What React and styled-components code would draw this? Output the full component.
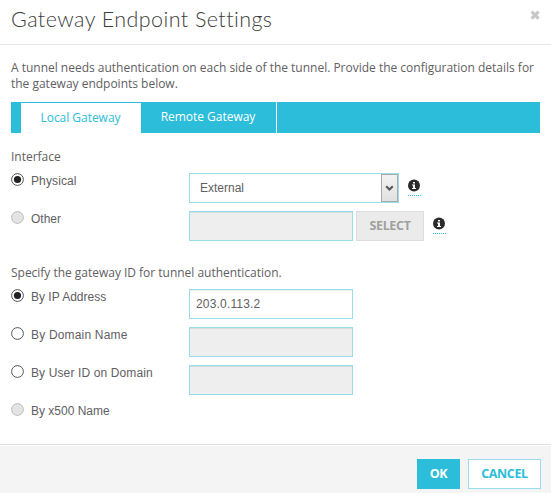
import React from "react";
import styled, { createGlobalStyle } from "styled-components";

const GlobalStyle = createGlobalStyle`
  * { box-sizing: border-box; }
  body { margin: 0; background: #fff; overflow: hidden; }
`;

const Dialog = styled.div`
  width: 551px;
  height: 493px;
  display: flex;
  flex-direction: column;
  background: #fff;
  color: #5f6062;
  font: 12px/16px "Open Sans", sans-serif;
`;

const Header = styled.header`
  display: flex;
  justify-content: space-between;
  height: 45px;
  padding: 5px 10px 0 11px;
  border-bottom: 1px solid #e9e9e9;
`;

const Title = styled.h1`
  margin: 0;
  font: 300 21.5px/29px Lato, sans-serif;
  letter-spacing: 0.44px;
  color: #3c3c3c;
  white-space: nowrap;
`;

const CloseButton = styled.button`
  width: 11px;
  height: 11px;
  margin-top: 5px;
  padding: 0;
  border: 0;
  background: none;
  svg { display: block; }
`;

const Body = styled.main`
  flex: 1;
  padding: 15px 11px 0;
`;

const Intro = styled.p`
  margin: 0 -10px 10px 0;
  letter-spacing: -0.01px;
`;

const TabBar = styled.nav`
  display: flex;
  height: 31px;
  padding-left: 10px;
  background: #2bbdd9;
`;

const Tab = styled.button`
  width: ${(p) => (p.$active ? 120 : 136)}px;
  height: ${(p) => (p.$active ? 30 : 31)}px;
  margin: ${(p) => (p.$active ? "1px 0 0" : "0")};
  padding: 0 1px 1px 0;
  border: 0;
  border-right: ${(p) => (p.$active ? "0" : "1px solid #fff")};
  background: ${(p) => (p.$active ? "#fff" : "#2bbdd9")};
  color: ${(p) => (p.$active ? "#2bbdd9" : "#fff")};
  font: 12px/16px "Open Sans", sans-serif;
  letter-spacing: -0.03px;
`;

const SectionTitle = styled.h2`
  margin: ${(p) => (p.$spaced ? "24px 0 8px" : "16px 0 8px")};
  font: 400 12px/16px "Open Sans", sans-serif;
  letter-spacing: -0.02px;
`;

const Row = styled.div`
  display: flex;
  align-items: flex-start;
  height: 30px;
  margin-bottom: 8px;
`;

const RadioLabel = styled.label`
  display: flex;
  gap: 7px;
  width: 178px;
  font: 12px/16px "Liberation Sans", Arial, sans-serif;
  letter-spacing: ${(p) => p.$tracking}px;
  svg { flex: none; }
`;

const Field = styled.input`
  width: 164px;
  height: 30px;
  padding: 0 6px;
  border: 1px solid #95dfec;
  border-radius: 0;
  background: ${(p) => (p.disabled ? "#eee" : "#fff")};
  box-shadow: inset 0 1px 0 ${(p) => (p.disabled ? "#d8dcdd" : "#ececec")};
  color: #5f6062;
  font: 12px/16px "Liberation Sans", Arial, sans-serif;
  letter-spacing: 0.17px;
`;

const SelectBox = styled.div`
  display: flex;
  align-items: center;
  justify-content: space-between;
  width: 210px;
  height: 30px;
  padding-left: 10px;
  border: 1px solid #95dfec;
  font: 12px/16px "Liberation Sans", Arial, sans-serif;
`;

const Arrow = styled.span`
  display: flex;
  align-items: center;
  justify-content: center;
  width: 17px;
  height: 28px;
  border: 1px solid #a9a9a9;
  background: linear-gradient(#f2f2f2, #e1e1e1);
`;

const Button = styled.button`
  width: ${(p) => p.$width}px;
  height: 30px;
  padding: 0;
  border: 1px solid ${(p) => p.$border};
  background: ${(p) => p.$bg};
  color: ${(p) => p.$fg};
  font: 700 12.5px/16px "Open Sans", sans-serif;
  letter-spacing: -0.35px;
`;

const SelectButton = styled(Button)`
  margin-left: 3px;
`;

const Hint = styled.span`
  width: 13px;
  height: 17px;
  margin: 6px 0 0 9px;
  border-bottom: 1px dotted #2bbdd9;
  svg { display: block; }
`;

const Footer = styled.footer`
  display: flex;
  justify-content: flex-end;
  gap: 8px;
  height: 49px;
  padding: 14px 10px 0 0;
  border-top: 1px solid #ddd;
  background: #f4f4f4;
  box-shadow: inset 0 1px 0 #fff;
`;

function RadioMark({ checked, disabled }) {
  return (
    <svg width="13" height="13" viewBox="0 0 13 13">
      <circle cx="6.5" cy="6.5" r="5.9" fill={disabled ? "#e4e4e4" : "#fff"} stroke={disabled ? "#bcbcbc" : "#555"} />
      {checked && <circle cx="6.5" cy="6.5" r="3.6" fill="#222" />}
    </svg>
  );
}

function Choice({ label, checked, disabled, tracking = 0, children }) {
  return (
    <Row>
      <RadioLabel $tracking={tracking}>
        <RadioMark checked={checked} disabled={disabled} />
        {label}
      </RadioLabel>
      {children}
    </Row>
  );
}

function Info() {
  return (
    <Hint>
      <svg width="12" height="13" viewBox="0 0 12 13">
        <circle cx="6" cy="6.5" r="6" fill="#2b2b2b" />
        <path d="M5 3h2v1.6H5zM4 5.5h3V9h1v1H4V9h1V6.5H4z" fill="#fff" />
      </svg>
    </Hint>
  );
}

export default function App() {
  return (
    <Dialog>
      <GlobalStyle />
      <Header>
        <Title>Gateway Endpoint Settings</Title>
        <CloseButton aria-label="Close">
          <svg width="11" height="11" viewBox="0 0 11 11">
            <path d="M1.6 1.6l7 7M8.6 1.6l-7 7" stroke="#c8c8c8" strokeWidth="3.2" />
          </svg>
        </CloseButton>
      </Header>
      <Body>
        <Intro>
          A tunnel needs authentication on each side of the tunnel. Provide the configuration details for
          <br />
          the gateway endpoints below.
        </Intro>
        <TabBar>
          <Tab $active>Local Gateway</Tab>
          <Tab>Remote Gateway</Tab>
        </TabBar>
        <SectionTitle>Interface</SectionTitle>
        <Choice label="Physical" checked tracking={0.12}>
          <SelectBox>
            External
            <Arrow>
              <svg width="9" height="7" viewBox="0 0 9 7">
                <path d="M1.2 1.2L4.5 4.5L7.8 1.2" fill="none" stroke="#555" strokeWidth="2" />
              </svg>
            </Arrow>
          </SelectBox>
          <Info />
        </Choice>
        <Choice label="Other" disabled>
          <Field disabled />
          <SelectButton $width={68} $bg="#ebebeb" $border="#ddd" $fg="#a0a0a0" disabled>SELECT</SelectButton>
          <Info />
        </Choice>
        <SectionTitle $spaced>Specify the gateway ID for tunnel authentication.</SectionTitle>
        <Choice label="By IP Address" checked>
          <Field defaultValue="203.0.113.2" />
        </Choice>
        <Choice label="By Domain Name" tracking={0.18}>
          <Field disabled />
        </Choice>
        <Choice label="By User ID on Domain" tracking={0.12}>
          <Field disabled />
        </Choice>
        <Choice label="By x500 Name" disabled />
      </Body>
      <Footer>
        <Button $width={43} $bg="#2bbdd9" $border="#2bbdd9" $fg="#fff">OK</Button>
        <Button $width={73} $bg="#fff" $border="#95dfec" $fg="#2bbdd9">CANCEL</Button>
      </Footer>
    </Dialog>
  );
}
